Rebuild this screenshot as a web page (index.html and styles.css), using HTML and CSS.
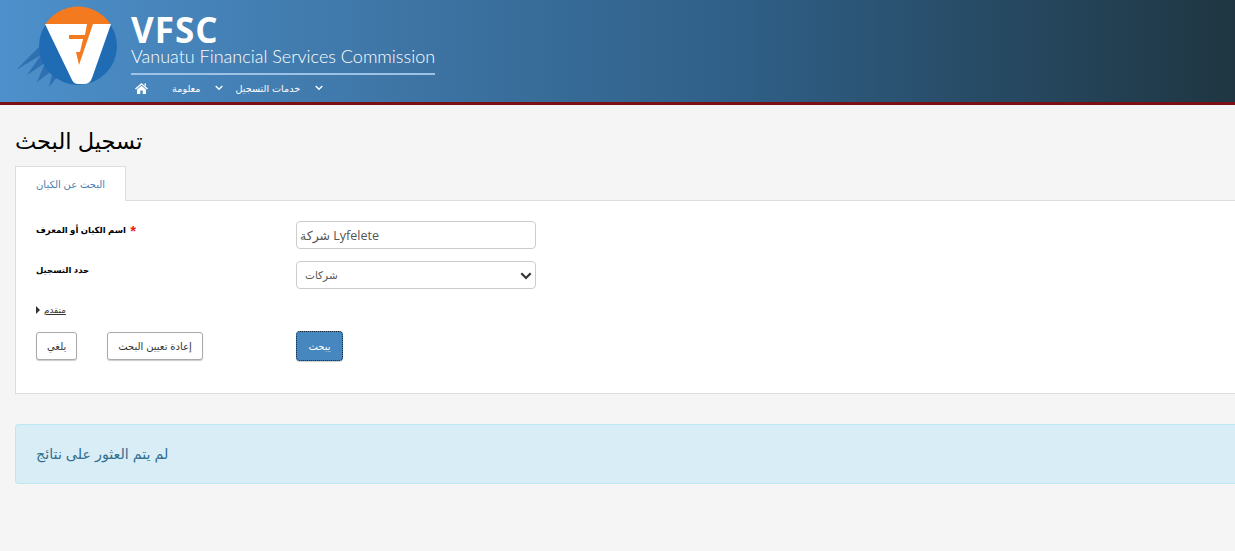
FILE: index.html
```html
<!DOCTYPE html>
<html lang="ar">
<head>
<meta charset="utf-8">
<title>تسجيل البحث</title>
<link rel="stylesheet" href="styles.css">
</head>
<body>
<header class="banner">
  <svg class="logo" width="104" height="84" viewBox="0 0 104 84" aria-hidden="true">
    <path d="M27 39 L1 65 L26 50 L12 70 L30 58 L22 77 L38 65 L34 82 L44 70 Z" fill="#2f70b3"/>
    <circle cx="63" cy="41" r="39" fill="#1f6cb5"/>
    <path d="M30.500 19 A39 39 0 0 1 95.500 19 Z" fill="#f47a20"/>
    <path d="M30 19 H96 L77 73 Q75 79 69 79 H63 Q59 79 57 75 Z" fill="#fff"/>
    <path d="M72 19 L78 19 L64 60 L61 47 L65 47 L68 34 L54 34 L54 30 L70 30 Z" fill="#f47a20"/>
  </svg>
  <div class="brand">
    <div class="brand-name">VFSC</div>
    <div class="brand-full">Vanuatu Financial Services Commission</div>
    <nav class="nav">
      <svg class="home" width="13" height="11" viewBox="0 0 13 11" aria-hidden="true"><path d="M6.500 0 L13 5.600 L12 6.500 L6.500 1.800 L1 6.500 L0 5.600 Z M2 6.600 L6.500 2.800 L11 6.600 V11 H7.700 V7.500 H5.300 V11 H2 Z M9.500 .5 H11 V3 L9.500 2 Z" fill="#fff"/></svg>
      <a class="nav-item">معلومة</a>
      <svg class="chev" width="8" height="6" viewBox="0 0 8 6" aria-hidden="true"><path d="M.7 1 L4 4.300 L7.300 1" fill="none" stroke="#fff" stroke-width="1.300"/></svg>
      <a class="nav-item">خدمات التسجيل</a>
      <svg class="chev" width="8" height="6" viewBox="0 0 8 6" aria-hidden="true"><path d="M.7 1 L4 4.300 L7.300 1" fill="none" stroke="#fff" stroke-width="1.300"/></svg>
    </nav>
  </div>
</header>
<main class="main">
  <h1 class="title">تسجيل البحث</h1>
  <div class="tabs"><div class="tab">البحث عن الكيان</div></div>
  <section class="card">
    <form class="form">
      <label class="label">اسم الكيان أو المعرف <span class="req">*</span></label>
      <input class="control" type="text" value="شركة Lyfelete">
      <label class="label">حدد التسجيل</label>
      <div class="select-wrap">
        <div class="control select">شركات</div>
        <svg class="select-arrow" width="12" height="8" viewBox="0 0 12 8" aria-hidden="true"><path d="M1.300 1.300 L6 6 L10.700 1.300" fill="none" stroke="#333" stroke-width="2.200"/></svg>
      </div>
    </form>
    <div class="advanced"><span class="caret"></span><a class="advanced-link">متقدم</a></div>
    <div class="actions">
      <div class="actions-left">
        <button class="btn" type="button">يلغي</button>
        <button class="btn" type="button">إعادة تعيين البحث</button>
      </div>
      <button class="btn btn-primary" type="button">يبحث</button>
    </div>
  </section>
  <div class="alert">لم يتم العثور على نتائج</div>
</main>
</body>
</html>
```
FILE: styles.css
```css
* { box-sizing: border-box; }
html, body { margin: 0; height: 100%; overflow: hidden; }
body {
  background: #f5f5f5;
  color: #000;
  font-family: "Liberation Sans", "DejaVu Sans", sans-serif;
  font-size: 12px;
}
.banner {
  display: flex;
  height: 105px;
  padding: 5px 0 0 15px;
  gap: 12px;
  background: linear-gradient(90deg, #4d90cb 0%, #3f77a8 30%, #2f5f87 60%, #1f3642 100%);
  border-bottom: 3px solid #7b0f14;
}
.logo { flex: none; }
.brand { width: 304px; color: #fff; }
.brand-name {
  font-family: "Open Sans", sans-serif;
  font-weight: 700;
  font-size: 35px;
  line-height: 30px;
  margin-top: 10px;
  letter-spacing: 1px;
}
.brand-full {
  font-family: "Lato", sans-serif;
  font-weight: 300;
  font-size: 18px;
  line-height: 23px;
  height: 30px;
  border-bottom: 2px solid #9cc3e6;
  white-space: nowrap;
}
.nav {
  display: flex;
  align-items: center;
  height: 26px;
  padding-left: 4px;
  font-size: 9.700px;
  color: #fff;
}
.home { margin-right: 24px; }
.nav-item { white-space: nowrap; }
.chev { margin: 0 12px 0 15px; }
.main { padding-left: 15px; }
.title {
  margin: 0;
  padding-top: 20px;
  height: 61px;
  font-size: 22.500px;
  line-height: 34px;
  font-weight: 400;
}
.tabs { display: flex; height: 35px; }
.tab {
  width: 111px;
  height: 35px;
  background: #fff;
  border: 1px solid #ddd;
  border-bottom: 0;
  color: #4a7fae;
  font-size: 10px;
  line-height: 36px;
  text-align: center;
  position: relative;
  z-index: 1;
}
.card {
  height: 194px;
  margin-top: -1px;
  padding: 20px 0 0 20px;
  background: #fff;
  border: 1px solid #ddd;
  border-right: 0;
}
.form {
  display: grid;
  grid-template-columns: 260px 240px;
  grid-auto-rows: 28px;
  row-gap: 12px;
}
.label { font-size: 8.500px; font-weight: 700; line-height: 12px; padding-top: 3px; white-space: nowrap; }
.req { color: #e3211c; font-size: 15px; line-height: 0; margin-left: 2px; vertical-align: -3px; }
.control {
  width: 240px;
  height: 28px;
  padding: 0 3px;
  background: #fff;
  border: 1px solid #ccc;
  border-radius: 4px;
  color: #555;
  font-family: "Open Sans", "DejaVu Sans", sans-serif;
  font-size: 12.500px;
  line-height: 26px;
}
.select-wrap { position: relative; }
.select { padding-left: 8px; font-size: 10.500px; }
.select-arrow { position: absolute; right: 4px; top: 11px; }
.advanced { display: flex; align-items: center; gap: 4px; height: 20px; margin-top: 11px; font-size: 8.800px; }
.caret { border-left: 4px solid #333; border-top: 4px solid transparent; border-bottom: 4px solid transparent; }
.advanced-link { text-decoration: underline; color: #333; }
.actions { display: flex; align-items: flex-start; margin-top: 11px; }
.actions-left { display: flex; gap: 30px; width: 260px; padding-top: 1px; }
.btn {
  height: 28px;
  padding: 0 10px;
  background: #fff;
  border: 1px solid #aaa;
  border-radius: 3px;
  box-shadow: 0 1px 1px rgba(0,0,0,.2);
  color: #333;
  font-family: "Liberation Sans", "DejaVu Sans", sans-serif;
  font-size: 10px;
}
.btn-primary {
  width: 47px;
  height: 30px;
  background: #4787c0;
  border: 1px dotted #123;
  border-radius: 4px;
  color: #fff;
}
.alert {
  height: 60px;
  margin-top: 30px;
  padding-left: 20px;
  background: #d9edf7;
  border: 1px solid #bce8f1;
  border-right: 0;
  border-radius: 4px 0 0 4px;
  color: #31708f;
  font-size: 14.300px;
  line-height: 58px;
}
```
